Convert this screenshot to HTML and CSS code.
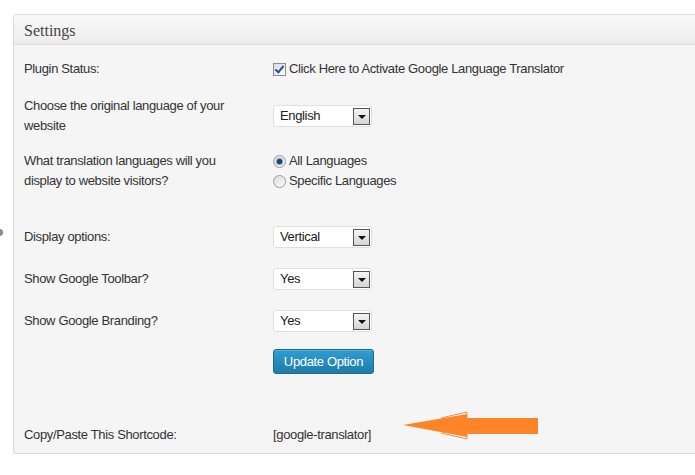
FILE: index.html
```
<!DOCTYPE html>
<html lang="en">
<head>
    <meta charset="UTF-8">
    <title>Google Language Translator - Settings</title>
    <link rel="stylesheet" href="styles.css">
</head>
<body>
    <span class="edge-dot"></span>
    <div class="postbox">
        <h3 class="postbox-title">Settings</h3>
        <div class="inside">
            <div class="row row-status">
                <div class="label">Plugin Status:</div>
                <div class="value">
                    <span class="checkbox checked"></span>Click Here to Activate Google Language Translator
                </div>
            </div>
            <div class="row row-language">
                <div class="label">Choose the original language of your website</div>
                <div class="value">
                    <div class="select"><span>English</span><span class="select-btn"></span></div>
                </div>
            </div>
            <div class="row row-translations">
                <div class="label">What translation languages will you display to website visitors?</div>
                <div class="value">
                    <div class="radio-line"><span class="radio checked"></span>All Languages</div>
                    <div class="radio-line"><span class="radio"></span>Specific Languages</div>
                </div>
            </div>
            <div class="row row-display">
                <div class="label">Display options:</div>
                <div class="value">
                    <div class="select"><span>Vertical</span><span class="select-btn"></span></div>
                </div>
            </div>
            <div class="row row-select">
                <div class="label">Show Google Toolbar?</div>
                <div class="value">
                    <div class="select"><span>Yes</span><span class="select-btn"></span></div>
                </div>
            </div>
            <div class="row row-select">
                <div class="label">Show Google Branding?</div>
                <div class="value">
                    <div class="select"><span>Yes</span><span class="select-btn"></span></div>
                </div>
            </div>
            <div class="row row-submit">
                <div class="label"></div>
                <div class="value">
                    <button class="button-primary">Update Option</button>
                </div>
            </div>
            <div class="row row-shortcode">
                <div class="label">Copy/Paste This Shortcode:</div>
                <div class="value">
                    [google-translator]
                    <svg class="arrow" width="138" height="30" viewBox="0 0 138 30">
                        <polygon points="2,14 66,3 66,7 137,7 137,23 66,23 66,26" fill="#fe8427"/>
                        <polyline points="40,7 66,1 66,8" fill="none" stroke="#e0935a" stroke-width="1"/>
                        <polyline points="40,22 66,28 66,22" fill="none" stroke="#e0935a" stroke-width="1"/>
                    </svg>
                </div>
            </div>
        </div>
    </div>
</body>
</html>
```

FILE: styles.css
```
body {
    margin: 0;
    background: #fff;
    font-family: "Liberation Sans", Arial, sans-serif;
    font-size: 13px;
    letter-spacing: -0.35px;
    color: #333;
    position: relative;
    overflow: hidden;
}
.edge-dot {
    position: absolute;
    left: -4px;
    top: 229px;
    width: 7px;
    height: 7px;
    border-radius: 50%;
    background: #8c8c8c;
}
.postbox {
    margin: 14px 0 0 13px;
    width: 720px;
    border: 1px solid #dcdcdc;
    border-right: none;
    border-radius: 3px 0 0 3px;
    background: #f5f5f5;
}
.postbox-title {
    margin: 0;
    height: 29px;
    line-height: 31px;
    padding-left: 10px;
    font-family: "Liberation Serif", Georgia, serif;
    font-size: 16px;
    font-weight: normal;
    letter-spacing: 0;
    color: #464646;
    background: linear-gradient(#f9f9f9, #ececec);
    border-bottom: 1px solid #dfdfdf;
}
.inside {
    padding: 14px 0 8px 10px;
}
.row {
    display: flex;
    align-items: center;
    line-height: 20px;
}
.label {
    width: 249px;
    padding-right: 24px;
    box-sizing: border-box;
}
.value {
    display: flex;
    align-items: center;
}
.row-language { margin-top: 17px; }
.row-translations { margin-top: 15px; align-items: flex-start; }
.row-translations .value { display: block; }
.row-display { margin-top: 35px; }
.row-select { margin-top: 20px; }
.row-submit { margin-top: 17px; }
.row-shortcode { margin-top: 51px; }
.row-shortcode .value { position: relative; }

.checkbox,
.radio {
    width: 11px;
    height: 11px;
    margin: 0 3px 0 0;
    border: 1px solid #8e8f8f;
    background: linear-gradient(135deg, #dcdcdc, #fbfbfb);
    position: relative;
    flex: none;
}
.checkbox.checked::after {
    content: "";
    position: absolute;
    left: 3px;
    top: 0px;
    width: 3px;
    height: 7px;
    border: solid #2b4f9a;
    border-width: 0 2px 2px 0;
    transform: rotate(40deg);
}
.radio-line {
    display: flex;
    align-items: center;
}
.radio {
    border-radius: 50%;
    border-color: #9a9a9a;
}
.radio.checked::after {
    content: "";
    position: absolute;
    left: 3px;
    top: 3px;
    width: 5px;
    height: 5px;
    border-radius: 50%;
    background: #1f3f6b;
    box-shadow: 0 0 1px 1px #6e9bc6;
}
.select {
    width: 99px;
    height: 22px;
    box-sizing: border-box;
    border: 1px solid #dfdfdf;
    border-radius: 3px;
    background: #fff;
    display: flex;
    align-items: center;
    justify-content: space-between;
    padding: 0 1px 0 6px;
    color: #222;
}
.select-btn {
    width: 15px;
    height: 15px;
    border: 1px solid #555;
    background: linear-gradient(#f4f4f4, #d4d4d4);
    position: relative;
}
.select-btn::after {
    content: "";
    position: absolute;
    left: 4px;
    top: 6px;
    border-left: 4px solid transparent;
    border-right: 4px solid transparent;
    border-top: 4px solid #111;
}
.button-primary {
    width: 101px;
    height: 25px;
    border: 1px solid #1b6a92;
    border-radius: 3px;
    background: linear-gradient(#2e9ed1, #1f7ba8);
    color: #fff;
    font-family: "Liberation Sans", Arial, sans-serif;
    font-size: 13px;
    letter-spacing: -0.35px;
    padding: 0;
    box-shadow: inset 0 1px 0 rgba(120, 200, 230, 0.5);
}
.arrow {
    position: absolute;
    left: 128px;
    top: -14px;
}
```
